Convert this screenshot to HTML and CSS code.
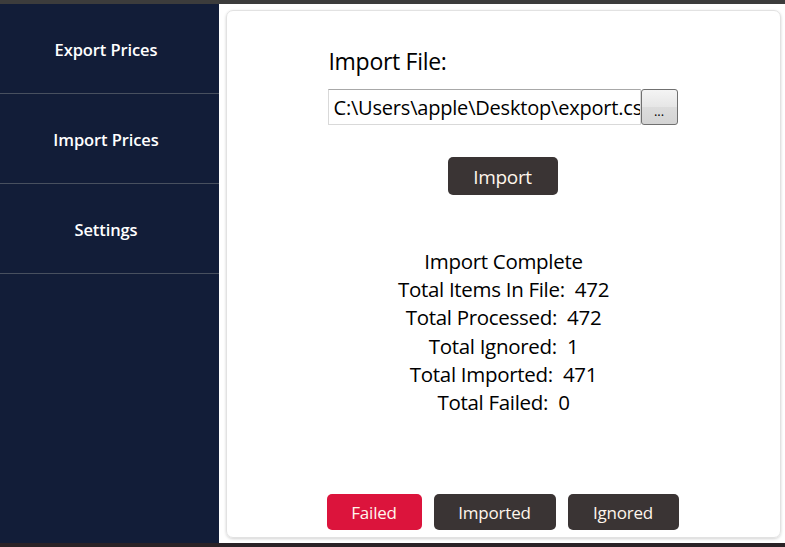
FILE: index.html
```html
<!DOCTYPE html>
<html>
<head>
<meta charset="utf-8">
<link rel="stylesheet" href="styles.css">
</head>
<body>
<div class="topbar"></div>
<div class="app">
  <nav class="sidebar">
    <div class="nav-item">Export Prices</div>
    <div class="nav-item">Import Prices</div>
    <div class="nav-item">Settings</div>
  </nav>
  <main class="content">
    <section class="card">
      <div class="form">
        <div class="label">Import File:</div>
        <div class="file-row">
          <input class="file-input" type="text" readonly value="C:\Users\apple\Desktop\export.csv">
          <div class="browse">...</div>
        </div>
        <div class="import-btn">Import</div>
      </div>
      <div class="summary">
        <div>Import Complete</div>
        <div>Total Items In File:&nbsp; 472</div>
        <div>Total Processed:&nbsp; 472</div>
        <div>Total Ignored:&nbsp; 1</div>
        <div>Total Imported:&nbsp; 471</div>
        <div>Total Failed:&nbsp; 0</div>
      </div>
      <div class="actions">
        <div class="btn btn-red">Failed</div>
        <div class="btn btn-dark btn-imported">Imported</div>
        <div class="btn btn-dark btn-ignored">Ignored</div>
      </div>
    </section>
  </main>
</div>
<div class="bottombar"></div>
</body>
</html>
```

FILE: styles.css
```css
html, body {
  margin: 0;
  padding: 0;
  width: 785px;
  height: 547px;
  overflow: hidden;
  background: #ffffff;
  font-family: "Open Sans", "Noto Sans", sans-serif;
}
.topbar {
  height: 4px;
  background: #3c3c3c;
}
.bottombar {
  height: 4px;
  background: #2a2226;
}
.app {
  display: flex;
  height: 539px;
}
.sidebar {
  width: 219px;
  background: #121d38;
  display: flex;
  flex-direction: column;
}
.nav-item {
  height: 90px;
  border-bottom: 1px solid #48505f;
  box-sizing: border-box;
  padding: 2px 7px 0 0;
  display: flex;
  align-items: center;
  justify-content: center;
  color: #ffffff;
  font-weight: 600;
  font-size: 16.5px;
  letter-spacing: -0.1px;
}
.content {
  flex: 1;
  padding: 6px 4px 5px 7px;
  display: flex;
}
.card {
  flex: 1;
  border: 1px solid #e2e2e2;
  border-radius: 7px;
  box-shadow: 0 1px 3px rgba(0,0,0,0.18);
  display: flex;
  flex-direction: column;
  align-items: center;
}
.form {
  width: 350px;
  margin-top: 34px;
  margin-left: -2px;
  display: flex;
  flex-direction: column;
}
.label {
  font-size: 23px;
  line-height: 32px;
  color: #000;
  letter-spacing: -0.3px;
  margin-left: 1px;
}
.file-row {
  display: flex;
  margin-top: 12px;
  height: 36px;
}
.file-input {
  width: 313px;
  height: 36px;
  margin: 0;
  box-sizing: border-box;
  border: 1px solid #d9d9d9;
  border-top-color: #a8a8a8;
  border-radius: 0;
  padding: 0 0 0 5px;
  font-family: "Open Sans", "Noto Sans", sans-serif;
  font-size: 20px;
  color: #000;
  background: #fff;
  letter-spacing: -0.2px;
  outline: none;
}
.browse {
  width: 37px;
  box-sizing: border-box;
  border: 1px solid #707070;
  border-radius: 3px;
  background: linear-gradient(#f4f4f4, #e6e6e6 50%, #dcdcdc 50%, #d4d4d4);
  font-size: 13px;
  line-height: 13px;
  text-align: center;
  display: flex;
  align-items: flex-end;
  justify-content: center;
  padding-bottom: 6px;
  color: #000;
}
.import-btn {
  align-self: center;
  margin-top: 32px;
  margin-left: 0;
  width: 110px;
  height: 38px;
  border-radius: 5px;
  background: #3a3434;
  color: #fff6ec;
  font-size: 19px;
  display: flex;
  align-items: center;
  justify-content: center;
  letter-spacing: -0.3px;
  padding-top: 1px;
  box-sizing: border-box;
}
.summary {
  margin-top: 52px;
  text-align: center;
  font-size: 20.5px;
  line-height: 28.2px;
  color: #000;
  letter-spacing: -0.3px;
}
.actions {
  margin-top: auto;
  margin-bottom: 7px;
  margin-left: -2px;
  display: flex;
  gap: 12px;
}
.btn {
  height: 36px;
  border-radius: 5px;
  color: #fff6ec;
  font-size: 17px;
  display: flex;
  align-items: center;
  justify-content: center;
  letter-spacing: -0.2px;
}
.btn-red {
  width: 95px;
  background: #dc143c;
}
.btn-dark {
  background: #3a3434;
}
.btn-imported {
  width: 122px;
}
.btn-ignored {
  width: 111px;
}
```
